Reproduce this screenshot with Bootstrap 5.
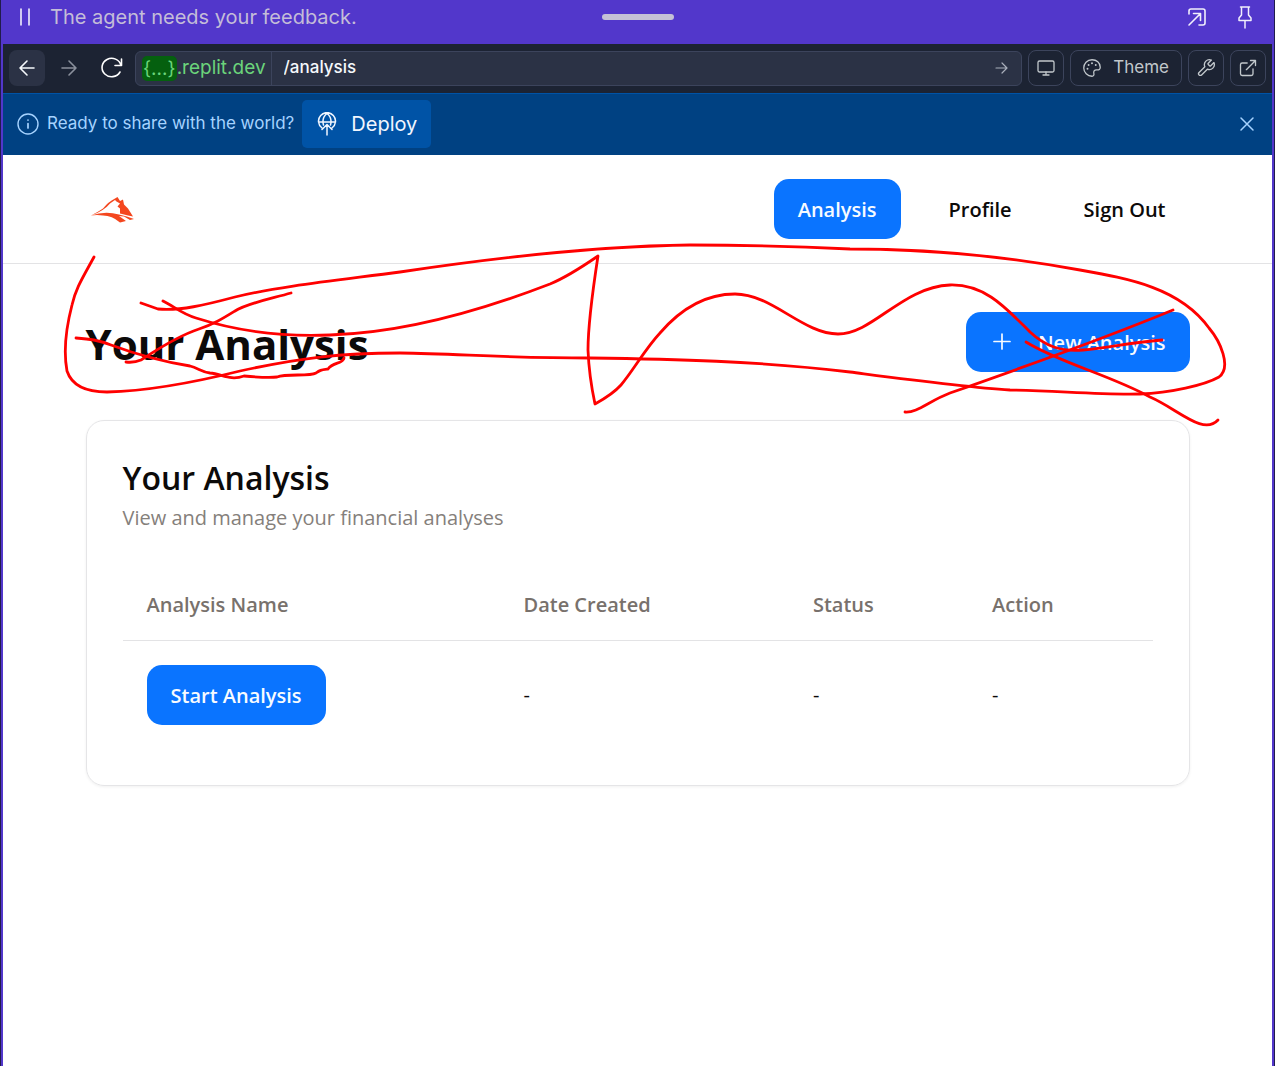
<!DOCTYPE html>
<html lang="en">
<head>
<meta charset="utf-8">
<meta name="viewport" content="width=device-width, initial-scale=1">
<title>Analysis</title>
<link href="https://cdn.jsdelivr.net/npm/bootstrap@5.3.0/dist/css/bootstrap.min.css" rel="stylesheet">
<style>
:root{--brand:#0a74ff;--purple:#5237cb;--ui:"Inter","Roboto",sans-serif;--app:"Open Sans","Noto Sans",sans-serif}
body{background:#211c4c;font-family:var(--ui);padding:0 1px;overflow-x:hidden}
svg{display:block;flex:none;fill:none;stroke:currentColor;stroke-linecap:round;stroke-linejoin:round}
.frame{min-height:100vh;background:var(--purple);padding:0 2px;position:relative}
.agent-bar{height:44px;padding:0 15px 10px 15px;color:#c4bdd8;font-size:20px}
.agent-bar svg{color:#f1effc}
.icon-btn{border:0;background:none;padding:0;color:inherit}
.grip{left:50%;top:14px;width:72px;height:6px;border-radius:3px;background:#c4c1d6;transform:translateX(-50%)}
.toolbar{height:49px;padding:0 6px 1px;background:#1c2333;color:#f5f9fc;gap:6px}
.tool-btn{height:36px;min-width:36px;border:1px solid #3c445c;border-radius:8px;background:none;color:#c2c8cc;padding:0;font-size:18px}
.tool-btn.is-plain{border-color:transparent}
.tool-btn.is-filled{background:#2b3245;color:#f5f9fc;border-color:transparent}
.tool-btn.is-dim{color:#8a909c}
.tool-btn.is-wide{padding:0 12px;gap:12px;font-size:17px}
.address{height:35px;border:1px solid #3c445c;border-radius:6px;background:#2b3245;min-width:0}
.host{color:#6bd47b;font-size:19px;padding:0 5px 0 6px;border-right:1px solid #3c445c;height:100%}
.host-tag{background:#05600f;border-radius:5px;line-height:25px;padding:0 1px}
.path-input{border:0;background:none;color:#f5f9fc;font-size:17px;font-weight:500;padding:0 12px;outline:0;min-width:0}
.banner{height:62px;background:#004182;border-top:1px solid #0053a6;color:#a6d3ff;font-size:17px;padding:0 17px 2px 14px}
.deploy{height:48px;border:0;border-radius:5px;background:#0053a6;color:#f0f6ff;font-size:20px;padding:0 14px 0 15px;gap:14px}
.app{background:#fff;color:#0c0a09;font-family:var(--app);font-size:20px;line-height:30px;min-height:calc(100vh - 155px)}
.app-wrap{max-width:1104px;margin:0 auto}
.app-head{border-bottom:1px solid #e3e3e5;padding:24px 0}
.app-btn{height:60px;border:0;border-radius:15px;padding:2px 24px 0;font-family:var(--app);font-size:20px;font-weight:600;color:inherit;text-decoration:none;display:inline-flex;align-items:center}
.app-btn.is-main{background:var(--brand);color:#f7fbff}
h1{font-size:42px;font-weight:700;line-height:56px;padding-top:4px;margin:0}
.panel{border:1px solid #e5e5e7;border-radius:18px;box-shadow:0 1px 3px rgba(0,0,0,.06);padding:36px;margin-top:48px}
h2{font-size:32px;font-weight:600;line-height:42px;margin:0}
.muted-text{color:#85807b;line-height:38px;margin:0 0 34px}
.runs{width:100%;table-layout:fixed}
.runs th{color:#78716c;font-weight:600;height:69px;padding:0 24px;border-bottom:1px solid #e3e3e5}
.runs td{padding:24px}
.ink{left:0;top:0;color:red;stroke-width:2.8;pointer-events:none;z-index:5}
</style>
<script src="https://cdn.jsdelivr.net/npm/bootstrap@5.3.0/dist/js/bootstrap.bundle.min.js"></script>
</head>
<body>
<div class="frame">
  <div class="agent-bar d-flex align-items-center position-relative">
    <svg width="16" height="20" viewBox="0 0 16 20" stroke-width="1.6"><path d="M3 2v16M11 2v16"/></svg>
    <span class="ms-3">The agent needs your feedback.</span>
    <span class="grip position-absolute"></span>
    <button class="icon-btn ms-auto me-4" aria-label="Pop out"><svg width="24" height="24" viewBox="0 0 24 24" stroke-width="1.6"><path d="M4 9V6q0-2 2-2h12q2 0 2 2v12q0 2-2 2h-4M4 20L15.500 8.500M8.500 8.500h7v7"/></svg></button>
    <button class="icon-btn" aria-label="Pin"><svg width="24" height="24" viewBox="0 0 24 24" stroke-width="1.500"><path d="M7.500 2h9M8.500 2v8L6 13v2.500h12V13l-2.500-3V2M12 15.500V23"/></svg></button>
  </div>

  <div class="toolbar d-flex align-items-center">
    <button class="tool-btn is-filled d-flex align-items-center justify-content-center" aria-label="Back"><svg width="20" height="20" viewBox="0 0 20 20" stroke-width="1.600"><path d="M17 10H3M10 3l-7 7 7 7"/></svg></button>
    <button class="tool-btn is-plain is-dim d-flex align-items-center justify-content-center" aria-label="Forward"><svg width="20" height="20" viewBox="0 0 20 20" stroke-width="1.600"><path d="M3 10h14M10 3l7 7-7 7"/></svg></button>
    <button class="tool-btn is-plain d-flex align-items-center justify-content-center text-white" aria-label="Reload"><svg width="24" height="24" viewBox="0 0 24 24" stroke-width="1.600"><path d="M22.500 3v6.500H16M22 9.500A9.600 9.200 0 1 0 21 16"/></svg></button>
    <div class="address d-flex align-items-center flex-grow-1">
      <span class="host d-flex align-items-center"><span class="host-tag">{...}</span>.replit.dev</span>
      <input class="path-input flex-grow-1" type="text" value="/analysis" aria-label="Path">
      <button class="icon-btn px-2 me-1" aria-label="Go"><svg width="16" height="16" viewBox="0 0 16 16" color="#a9afbb" stroke-width="1.200"><path d="M3 8h11M9 3l5 5-5 5"/></svg></button>
    </div>
    <button class="tool-btn d-flex align-items-center justify-content-center" aria-label="Device"><svg width="18" height="18" viewBox="0 0 18 18" stroke-width="1.300"><rect x="1" y="2" width="16" height="11" rx="1.500"/><path d="M9 13v3M6 16h6"/></svg></button>
    <button class="tool-btn is-wide d-flex align-items-center"><svg width="18" height="18" viewBox="0 0 24 24" stroke-width="1.700"><path d="M12 1C5.500 1 1 6 1 12s5 11 11 11c2 0 3-1.500 2.500-3.500-.8-3 .5-5 3.500-5 3.500.3 5-.8 5-3.500C23 5 18 1 12 1z"/><path d="M6 13v.1M7.500 8v.1M12 5.500v.1M17 8v.1" stroke-width="2.600"/></svg>Theme</button>
    <button class="tool-btn d-flex align-items-center justify-content-center" aria-label="Tools"><svg width="20" height="20" viewBox="0 0 24 24" stroke-width="1.600"><path d="M14.700 6.300a1 1 0 0 0 0 1.400l1.600 1.600a1 1 0 0 0 1.400 0l3.800-3.800a6 6 0 0 1-7.900 7.900l-6.900 6.900a2.100 2.100 0 0 1-3-3l6.900-6.900a6 6 0 0 1 7.900-7.900z"/></svg></button>
    <button class="tool-btn d-flex align-items-center justify-content-center" aria-label="Open in new tab"><svg width="20" height="20" viewBox="0 0 24 24" stroke-width="1.600"><path d="M18 13v6a2 2 0 0 1-2 2H5a2 2 0 0 1-2-2V8a2 2 0 0 1 2-2h6M15 3h6v6M10 14L21 3"/></svg></button>
  </div>

  <div class="banner d-flex align-items-center">
    <svg width="22" height="22" viewBox="0 0 22 22" stroke-width="1.400"><circle cx="11" cy="11" r="10"/><path d="M11 10.500V15M11 7v.1" stroke-width="1.700"/></svg>
    <span class="mx-2">Ready to share with the world?</span>
    <button class="deploy d-flex align-items-center"><svg width="20" height="24" viewBox="0 0 20 24" stroke-width="1.500"><path d="M5 16A8.500 8.500 0 1 1 15 16M1.500 10h17M6.500 13Q4.500 6 10 1.200M13.500 13Q15.500 6 10 1.200M10 23V12.500M5 17.500l5-5 5 5"/></svg>Deploy</button>
    <button class="icon-btn ms-auto" aria-label="Dismiss"><svg width="16" height="16" viewBox="0 0 16 16" stroke-width="1.500"><path d="M2 2l12 12M14 2L2 14"/></svg></button>
  </div>

  <div class="app">
    <header class="app-head">
      <div class="app-wrap d-flex align-items-center">
        <a href="#" aria-label="Home"><svg class="ms-1" width="46" height="30" viewBox="0 0 46 30" style="fill:#f4471f;stroke:none"><path d="M1 21.500Q8 18 13 14.500Q18 8 25 4.500L27.500 3l2.500 4 3-1.500 1 5 4 4 5 8-5-1-8-2v-5l-2.500-2 2.500-3-3.500-2-1.500-1.500-5 3.500Q14 17 1 21.500z"/><path d="M1 21.500q14-5 28-1 8 1.500 15 4.500l-4 1-6-3.500-5-.5 7 5-6 1.500q-8-7-17-7-6-1-12 0z"/></svg></a>
        <nav class="d-flex gap-4 ms-auto" aria-label="Main">
          <a class="app-btn is-main" href="#">Analysis</a>
          <a class="app-btn" href="#">Profile</a>
          <a class="app-btn" href="#">Sign Out</a>
        </nav>
      </div>
    </header>
    <main class="app-wrap pt-5">
      <div class="d-flex justify-content-between align-items-center">
        <h1>Your Analysis</h1>
        <button class="app-btn is-main"><svg class="me-4" width="24" height="24" viewBox="0 0 24 24" stroke-width="1.700"><path d="M12 3v15M4 10.500h16"/></svg>New Analysis</button>
      </div>
      <section class="panel">
        <h2>Your Analysis</h2>
        <p class="muted-text">View and manage your financial analyses</p>
        <table class="runs">
          <colgroup><col style="width:36.600%"><col style="width:28.100%"><col style="width:17.400%"><col></colgroup>
          <thead><tr><th>Analysis Name</th><th>Date Created</th><th>Status</th><th>Action</th></tr></thead>
          <tbody><tr><td><button class="app-btn is-main">Start Analysis</button></td><td>-</td><td>-</td><td>-</td></tr></tbody>
        </table>
      </section>
    </main>
  </div>
</div>
<svg class="ink position-absolute" width="1275" height="460" viewBox="0 0 1275 460" aria-hidden="true">
  <path d="M94 257C82 279 76 288 72 305C65 332 64 355 67 371C72 386 86 392 107 392C150 391 200 381 240 371C300 358 340 353 400 353C460 354 510 358 590 358C670 359 760 361 850 372C920 381 965 387 1010 390C1060 391 1100 395 1140 394C1170 393 1205 385 1219 377C1232 367 1220 341 1209 328C1180 288 1130 279 1080 270C1010 257 930 249 850 249C790 246 740 245 690 245C600 246 500 257 400 272C340 280 280 286 235 297C205 305 180 311 158 309L141 303"/>
  <path d="M163 301C175 307 182 314 196 318C240 332 285 337 330 335C400 333 480 311 550 284C567 277 582 267 598 256C592 295 588 325 588 350C589 375 592 390 595 404C604 399 613 394 621 385C633 371 645 349 660 333C685 304 710 294 735 294C772 294 803 334 838 334C873 334 902 287 950 285C985 284 1006 308 1030 332C1045 346 1061 352 1083 350C1110 348 1125 343 1162 340"/>
  <path d="M291 293C270 299 248 303 235 311C222 319 214 324 199 329C175 337 152 353 141 360Q134 363 126 362"/>
  <path d="M76 338C90 339 98 340 111 345C138 355 165 362 190 366C198 368 202 372 210 373C222 374 230 381 244 376C255 377 270 378 277 377C287 373 309 377 316 373C320 370 321 370 328 369C333 362 343 364 344 358"/>
  <path d="M905 412C917 413 929 401 950 393C1030 365 1110 336 1173 310"/>
  <path d="M1026 342C1060 363 1110 375 1150 397C1178 409 1203 436 1218 420"/>
</svg>
</body>
</html>
